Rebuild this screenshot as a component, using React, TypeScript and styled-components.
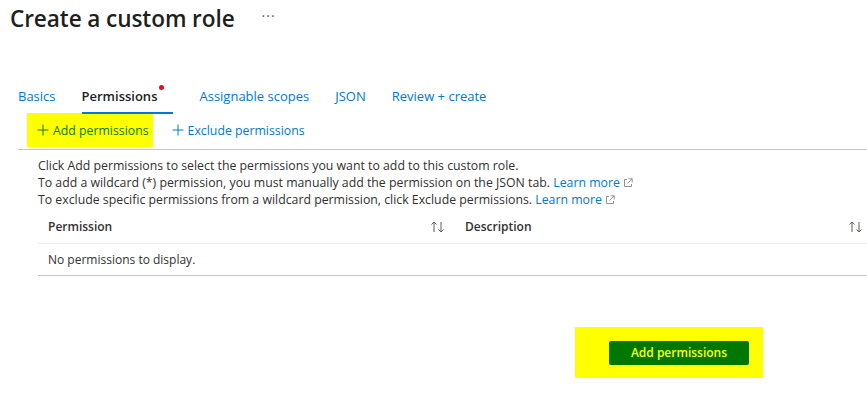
import styled, { createGlobalStyle } from 'styled-components'

const GlobalStyle = createGlobalStyle`
  body {
    margin: 0;
    background: #fff;
    font-family: 'Open Sans', 'Noto Sans', sans-serif;
    color: #323130;
  }
`

const Page = styled.div`
  width: 867px;
  height: 411px;
  overflow: hidden;
`

const TitleRow = styled.div`
  display: flex;
  align-items: center;
  padding: 2px 0 0 10px;
  height: 32px;
`

const Title = styled.h1`
  margin: 0;
  font-size: 22.6px;
  font-weight: 600;
  color: #201f1e;
  letter-spacing: -0.1px;
`

const More = styled.span`
  margin-left: 27px;
  font-size: 14px;
  color: #605e5c;
  letter-spacing: 1px;
  margin-top: -6px;
`

const Tabs = styled.div`
  display: flex;
  gap: 26px;
  margin: 52px 0 0 18px;
`

const Tab = styled.div<{ $active?: boolean }>`
  position: relative;
  font-size: 13px;
  line-height: 20px;
  padding-bottom: 6px;
  color: ${({ $active }) => ($active ? '#201f1e' : '#0078d4')};
  font-weight: ${({ $active }) => ($active ? 600 : 400)};
  border-bottom: 2px solid ${({ $active }) => ($active ? '#0078d4' : 'transparent')};
  padding-right: ${({ $active }) => ($active ? '16px' : '0')};
`

const Dot = styled.span`
  position: absolute;
  right: 9px;
  top: -1px;
  width: 5px;
  height: 5px;
  border-radius: 50%;
  background: #e00b1c;
`

const Toolbar = styled.div`
  display: flex;
  align-items: center;
  gap: 10px;
  margin: -1px 0 0 18px;
  padding: 0 0 2px 9px;
  border-bottom: 1px solid #c8c6c4;
`

const ToolButton = styled.div<{ $mark?: boolean }>`
  display: flex;
  align-items: center;
  gap: 4px;
  height: 34px;
  padding: 0 ${({ $mark }) => ($mark ? '4px 0 10px' : '9px')};
  font-size: 12.3px;
  background: ${({ $mark }) => ($mark ? '#ffff00' : 'transparent')};
  color: ${({ $mark }) => ($mark ? '#0a7a00' : '#0078d4')};
`

const Info = styled.div`
  margin: 7px 0 0 38px;
  font-size: 12.3px;
  line-height: 17px;
  color: #323130;
`

const Link = styled.span`
  color: #0078d4;
  display: inline-flex;
  align-items: center;
  gap: 3px;
`

const Table = styled.div`
  margin: 2px 0 0 38px;
`

const HeaderRow = styled.div`
  display: grid;
  grid-template-columns: 417px 1fr;
  height: 33px;
  border-bottom: 1px solid #edebe9;
`

const HeaderCell = styled.div<{ $last?: boolean }>`
  display: flex;
  align-items: center;
  justify-content: space-between;
  padding: 0 ${({ $last }) => ($last ? '3px' : '9px')} 0 10px;
  font-size: 12px;
  font-weight: 600;
  color: #323130;
`

const BodyRow = styled.div`
  display: flex;
  align-items: center;
  height: 31px;
  padding-left: 10px;
  font-size: 12px;
  border-bottom: 1px solid #c8c6c4;
`

const Footer = styled.div`
  margin: 51px 0 0 575px;
  width: 188px;
  height: 51px;
  background: #ffff00;
  display: flex;
  align-items: center;
  padding-left: 34px;
  box-sizing: border-box;
`

const PrimaryButton = styled.div`
  width: 140px;
  height: 24px;
  border-radius: 2px;
  background: #007800;
  color: #ffff00;
  font-size: 12px;
  font-weight: 600;
  display: flex;
  align-items: center;
  justify-content: center;
`

const Plus = ({ color }: { color: string }) => (
  <svg width="12" height="12" viewBox="0 0 12 12">
    <path d="M6 0.5v11M0.5 6h11" stroke={color} strokeWidth="1" fill="none" />
  </svg>
)

const External = () => (
  <svg width="10" height="10" viewBox="0 0 10 10">
    <path d="M4 1.5H1.5v7h7V6" stroke="#8a8886" strokeWidth="0.9" fill="none" />
    <path d="M5.5 0.8h3.7v3.7M9.2 0.8L4.5 5.5" stroke="#8a8886" strokeWidth="0.9" fill="none" />
  </svg>
)

const Sort = () => (
  <svg width="16" height="14" viewBox="0 0 16 14">
    <path d="M4 12V2M1.5 4.5L4 2l2.5 2.5" stroke="#605e5c" strokeWidth="1" fill="none" />
    <path d="M11 2v10M8.5 9.5L11 12l2.5-2.5" stroke="#605e5c" strokeWidth="1" fill="none" />
  </svg>
)

const tabs = ['Basics', 'Permissions', 'Assignable scopes', 'JSON', 'Review + create']

export default function App() {
  return (
    <>
      <GlobalStyle />
      <Page>
        <TitleRow>
          <Title>Create a custom role</Title>
          <More>···</More>
        </TitleRow>
        <Tabs>
          {tabs.map((t) => (
            <Tab key={t} $active={t === 'Permissions'}>
              {t}
              {t === 'Permissions' && <Dot />}
            </Tab>
          ))}
        </Tabs>
        <Toolbar>
          <ToolButton $mark>
            <Plus color="#0a7a00" />
            Add permissions
          </ToolButton>
          <ToolButton>
            <Plus color="#0078d4" />
            Exclude permissions
          </ToolButton>
        </Toolbar>
        <Info>
          <div>Click Add permissions to select the permissions you want to add to this custom role.</div>
          <div>
            To add a wildcard (*) permission, you must manually add the permission on the JSON tab.{' '}
            <Link>
              Learn more <External />
            </Link>
          </div>
          <div>
            To exclude specific permissions from a wildcard permission, click Exclude permissions.{' '}
            <Link>
              Learn more <External />
            </Link>
          </div>
        </Info>
        <Table>
          <HeaderRow>
            <HeaderCell>
              Permission
              <Sort />
            </HeaderCell>
            <HeaderCell $last>
              Description
              <Sort />
            </HeaderCell>
          </HeaderRow>
          <BodyRow>No permissions to display.</BodyRow>
        </Table>
        <Footer>
          <PrimaryButton>Add permissions</PrimaryButton>
        </Footer>
      </Page>
    </>
  )
}
